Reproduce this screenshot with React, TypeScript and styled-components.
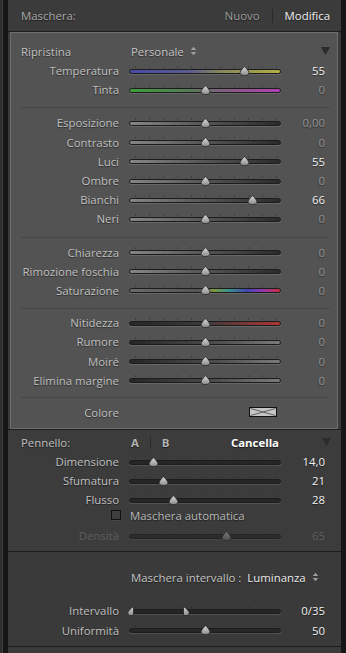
import React, { useId } from "react";
import styled, { createGlobalStyle } from "styled-components";

const GlobalStyle = createGlobalStyle`
  html, body {
    margin: 0;
    padding: 0;
    background: #161616;
  }
  body {
    font-family: "Open Sans", "Liberation Sans", Arial, sans-serif;
    font-size: 11.4px;
  }
`

const GREY_DOWN = "linear-gradient(to right, #858585, #5a5a5a 45%, #2a2a2a)"
const GREY_UP = "linear-gradient(to right, #262626, #4a4a4a 55%, #7a7a7a)"
const TEMP = "linear-gradient(to right, #4a4aa8, #5c5c90 40%, #86865c 60%, #b0b044)"
const TINT = "linear-gradient(to right, #3c9e3c, #587a58 40%, #80607e 60%, #b040b4)"
const SAT = "linear-gradient(to right, #6a6a6a, #555 45%, #7c9a3c 56%, #3a9090 66%, #4048b0 78%, #9038b0 88%, #c8303c)"
const SHARP = "linear-gradient(to right, #262626, #3a3a3a 50%, #b03434)"
const DARK = "#262626"

type SliderDef = { label: string; value: string; pos: number; fill: string; active?: boolean }

const basic: SliderDef[] = [
  { label: "Esposizione", value: "0,00", pos: 0.5, fill: GREY_DOWN },
  { label: "Contrasto", value: "0", pos: 0.5, fill: GREY_DOWN },
  { label: "Luci", value: "55", pos: 0.775, fill: GREY_DOWN, active: true },
  { label: "Ombre", value: "0", pos: 0.5, fill: GREY_DOWN },
  { label: "Bianchi", value: "66", pos: 0.83, fill: GREY_DOWN, active: true },
  { label: "Neri", value: "0", pos: 0.5, fill: GREY_DOWN },
]

const presence: SliderDef[] = [
  { label: "Chiarezza", value: "0", pos: 0.5, fill: GREY_DOWN },
  { label: "Rimozione foschia", value: "0", pos: 0.5, fill: GREY_DOWN },
  { label: "Saturazione", value: "0", pos: 0.5, fill: SAT },
]

const detail: SliderDef[] = [
  { label: "Nitidezza", value: "0", pos: 0.5, fill: SHARP },
  { label: "Rumore", value: "0", pos: 0.5, fill: GREY_UP },
  { label: "Moiré", value: "0", pos: 0.5, fill: GREY_UP },
  { label: "Elimina margine", value: "0", pos: 0.5, fill: GREY_UP },
]

const brush: SliderDef[] = [
  { label: "Dimensione", value: "14,0", pos: 0.14, fill: DARK, active: true },
  { label: "Sfumatura", value: "21", pos: 0.21, fill: DARK, active: true },
  { label: "Flusso", value: "28", pos: 0.28, fill: DARK, active: true },
]

const Thumb = ({ left, dim, half }: { left: number; dim?: boolean; half?: "l" | "r" }) => {
  const id = useId()
  const w = half ? 7 : 11
  const d =
    half === "l"
      ? "M6.5 0.5 V9.5 H4 C1.8 9.5 0.6 8.6 0.8 6.8 C1 5 3.8 2.4 6.5 0.5 Z"
      : half === "r"
      ? "M0.5 0.5 V9.5 H3 C5.2 9.5 6.4 8.6 6.2 6.8 C6 5 3.2 2.4 0.5 0.5 Z"
      : "M5.5 0.5 C6.6 2 9.6 4.4 9.9 6.6 C10.1 8.6 8.4 9.5 5.5 9.5 C2.6 9.5 0.9 8.6 1.1 6.6 C1.4 4.4 4.4 2 5.5 0.5 Z"
  const x = half === "l" ? left - 6.5 : half === "r" ? left - 0.5 : left - 5.5
  return (
    <ThumbSvg width={w} height={10} viewBox={`0 0 ${w} 10`} style={{ left: x }}>
      <defs>
        <linearGradient id={id} x1="0" y1="0" x2="0" y2="1">
          <stop offset="0" stopColor={dim ? "#7a7a7a" : "#dcdcdc"} />
          <stop offset="1" stopColor={dim ? "#4e4e4e" : "#8a8a8a"} />
        </linearGradient>
      </defs>
      <path d={d} fill={`url(#${id})`} stroke={dim ? "#2e2e2e" : "#262626"} strokeWidth="0.8" />
    </ThumbSvg>
  )
}

const Slider = ({ pos, fill, tick, dim, range }: { pos: number; fill: string; tick: string; dim?: boolean; range?: [number, number] }) => (
  <SliderBox>
    <Ticks $color={tick}>
      {Array.from({ length: 11 }).map((_, i) => <i key={i} />)}
    </Ticks>
    <Track $fill={fill} $dim={dim} />
    {range ? (
      <>
        <Thumb left={4 + range[0] * 144} half="l" />
        <Thumb left={4 + range[1] * 144} half="r" />
      </>
    ) : (
      <Thumb left={4 + pos * 144} dim={dim} />
    )}
  </SliderBox>
)

const UpDown = () => (
  <svg width="7" height="10" viewBox="0 0 7 10">
    <path d="M3.5 0.8 L6.3 4 H0.7 Z M0.7 6 H6.3 L3.5 9.2 Z" fill="#9c9c9c" />
  </svg>
)

const Collapse = ({ color }: { color: string }) => (
  <svg width="9" height="8" viewBox="0 0 9 8">
    <path d="M0 0 H9 L4.5 8 Z" fill={color} />
  </svg>
)

const NoColor = () => (
  <svg width="28" height="10" viewBox="0 0 28 10">
    <rect x="0.5" y="0.5" width="27" height="9" fill="#c6c6c6" stroke="#111" />
    <path d="M1.5 1.5 L14 5 L26.5 1.5 M1.5 8.5 L14 5 L26.5 8.5" stroke="#555" strokeWidth="0.9" fill="none" />
  </svg>
)

const SliderRow = ({ s, tick, dimLabel }: { s: SliderDef; tick: string; dimLabel?: boolean }) => (
  <Row>
    <Label $dim={dimLabel}>{s.label}</Label>
    <Slider pos={s.pos} fill={s.fill} tick={tick} />
    <Value $active={s.active}>{s.value}</Value>
  </Row>
)

export default function App() {
  return (
    <Frame>
      <GlobalStyle />
      <Rail />
      <Panel>
        <Header>
          <HeaderTitle>Maschera:</HeaderTitle>
          <ModeTab>Nuovo</ModeTab>
          <ModeDivider />
          <ModeTab $active>Modifica</ModeTab>
        </Header>

        <MaskBox>
          <Group $pt={8} $pb={8}>
            <HeadRow>
              <Label $left>Ripristina</Label>
              <Preset>
                Personale <UpDown />
              </Preset>
              <Collapse color="#2b2b2b" />
            </HeadRow>
            <SliderRow s={{ label: "Temperatura", value: "55", pos: 0.775, fill: TEMP, active: true }} tick="#3f3f3f" />
            <SliderRow s={{ label: "Tinta", value: "0", pos: 0.5, fill: TINT }} tick="#3f3f3f" />
          </Group>
          <Divider />
          <Group>
            {basic.map((s) => <SliderRow key={s.label} s={s} tick="#3f3f3f" />)}
          </Group>
          <Divider />
          <Group>
            {presence.map((s) => <SliderRow key={s.label} s={s} tick="#3f3f3f" />)}
          </Group>
          <Divider />
          <Group $pt={4} $pb={7}>
            {detail.map((s) => <SliderRow key={s.label} s={s} tick="#3f3f3f" />)}
          </Group>
          <Divider />
          <Group $pt={5} $pb={6}>
            <Row>
              <Label>Colore</Label>
              <SwatchCell>
                <NoColor />
              </SwatchCell>
            </Row>
          </Group>
        </MaskBox>

        <BrushSection>
          <HeadRow>
            <Label $left>Pennello:</Label>
            <Tabs>
              <Tab>A</Tab>
              <TabDivider />
              <Tab>B</Tab>
              <Tab $active>Cancella</Tab>
            </Tabs>
            <Collapse color="#2c2c2c" />
          </HeadRow>
          {brush.map((s) => <SliderRow key={s.label} s={s} tick="#323232" />)}
          <CheckRow>
            <Check />
            <CheckText>Maschera automatica</CheckText>
          </CheckRow>
          <Row>
            <Label $dim>Densità</Label>
            <Slider pos={0.65} fill="#2c2c2c" tick="#333" dim />
            <Value $dim>65</Value>
          </Row>
        </BrushSection>

        <RangeSection>
          <HeadRow>
            <span />
            <Preset>
              Maschera intervallo : <Strong>Luminanza</Strong> <UpDown />
            </Preset>
            <span />
          </HeadRow>
          <Spacer />
          <Row>
            <Label>Intervallo</Label>
            <Slider pos={0} fill={DARK} tick="#303030" range={[0, 0.35]} />
            <Value $active>0/35</Value>
          </Row>
          <Row>
            <Label>Uniformità</Label>
            <Slider pos={0.5} fill={DARK} tick="#303030" />
            <Value $active>50</Value>
          </Row>
        </RangeSection>
        <Rest />
      </Panel>
    </Frame>
  )
}

const Frame = styled.div`
  display: flex;
  width: 346px;
  height: 653px;
  background: #161616;
  overflow: hidden;
`

const Rail = styled.div`
  width: 2px;
  margin-right: 5px;
  background: #2e2e2e;
  border-right: 1px solid #404040;
`

const Panel = styled.div`
  display: flex;
  flex-direction: column;
  width: 333px;
  background: #3a3a3a;
`

const Header = styled.div`
  display: flex;
  align-items: center;
  height: 31px;
  padding: 0 11px 0 13px;
  border-bottom: 1px solid #1c1c1c;
  background: #3b3b3b;
  text-shadow: 0 1px 1px rgba(0, 0, 0, 0.5);
`

const HeaderTitle = styled.div`
  flex: 1;
  color: #a9a9a9;
`

const ModeTab = styled.div<{ $active?: boolean }>`
  color: ${(p) => (p.$active ? "#f2f2f2" : "#9e9e9e")};
`

const ModeDivider = styled.div`
  width: 1px;
  height: 14px;
  margin: 0 12px;
  background: #2a2a2a;
`

const MaskBox = styled.div`
  margin: 0 3px 0 2px;
  border: 1px solid #6e6e6e;
  background: #535353;
`

const Group = styled.div<{ $pt?: number; $pb?: number }>`
  padding: ${(p) => p.$pt ?? 5}px 0 ${(p) => p.$pb ?? 8}px;
`

const Divider = styled.div`
  height: 1px;
  margin: 0 7px 0 10px;
  background: #474747;
`

const HeadRow = styled.div`
  display: grid;
  grid-template-columns: 110px 1fr auto;
  align-items: center;
  height: 20px;
  padding: 0 7px 0 10px;
`

const Preset = styled.div`
  display: flex;
  align-items: center;
  gap: 6px;
  color: #c4c4c4;
  text-shadow: 0 1px 1px rgba(0, 0, 0, 0.5);
  white-space: nowrap;
`

const Strong = styled.span`
  color: #ececec;
`

const Row = styled.div`
  display: grid;
  grid-template-columns: 108px 162px 44px;
  grid-template-rows: 19.2px;
  align-items: center;
  height: 19.2px;
`

const Label = styled.span<{ $dim?: boolean; $left?: boolean }>`
  text-align: ${(p) => (p.$left ? "left" : "right")};
  white-space: nowrap;
  color: ${(p) => (p.$dim ? "#5c5c5c" : "#c0c0c0")};
  text-shadow: ${(p) => (p.$dim ? "none" : "0 1px 1px rgba(0, 0, 0, 0.5)")};
`

const Value = styled.span<{ $active?: boolean; $dim?: boolean }>`
  text-align: right;
  color: ${(p) => (p.$dim ? "#5e5e5e" : p.$active ? "#f0f0f0" : "#949494")};
  text-shadow: ${(p) => (p.$dim ? "none" : "0 1px 1px rgba(0, 0, 0, 0.5)")};
`

const SliderBox = styled.div`
  position: relative;
  width: 152px;
  height: 14px;
  margin-left: 10px;
`

const Ticks = styled.div<{ $color: string }>`
  position: absolute;
  top: 2px;
  left: 6px;
  right: 4px;
  display: flex;
  justify-content: space-between;
  & > i {
    width: 1px;
    height: 2px;
    background: ${(p) => p.$color};
  }
`

const Track = styled.div<{ $fill: string; $dim?: boolean }>`
  box-sizing: border-box;
  height: 5px;
  margin-top: 5px;
  border-radius: 3px;
  border: 1px solid ${(p) => (p.$dim ? "#242424" : "#1c1c1c")};
  background: ${(p) => p.$fill};
  box-shadow: 0 1px 0 rgba(255, 255, 255, ${(p) => (p.$dim ? 0.05 : 0.12)});
`

const ThumbSvg = styled.svg`
  position: absolute;
  top: 2px;
`

const SwatchCell = styled.div`
  display: flex;
  justify-content: flex-end;
  padding-right: 4px;
`

const BrushSection = styled.div`
  padding: 2px 3px 6px 3px;
  border-top: 1px solid #1c1c1c;
  background: #3c3c3c;
`

const Tabs = styled.div`
  display: flex;
  align-items: center;
  padding-right: 43px;
`

const Tab = styled.span<{ $active?: boolean }>`
  font-weight: 700;
  color: ${(p) => (p.$active ? "#ffffff" : "#b4b4b4")};
  text-shadow: 0 1px 1px rgba(0, 0, 0, 0.6);
  margin-left: ${(p) => (p.$active ? "auto" : "0")};
`

const TabDivider = styled.div`
  width: 1px;
  height: 13px;
  margin: 0 11px;
  background: #2a2a2a;
`

const CheckRow = styled.div`
  display: grid;
  grid-template-columns: 108px 162px 44px;
  grid-template-rows: 11px;
  align-items: center;
  height: 11px;
  line-height: 11px;
  margin-bottom: 5.5px;
`

const Check = styled.div`
  justify-self: end;
  width: 8px;
  height: 8px;
  margin-right: -2px;
  border: 1px solid #111;
  background: #3e3e3e;
  box-shadow: 0 1px 0 rgba(255, 255, 255, 0.06);
`

const CheckText = styled.span`
  padding-left: 11px;
  color: #b8b8b8;
  white-space: nowrap;
  text-shadow: 0 1px 1px rgba(0, 0, 0, 0.5);
`

const RangeSection = styled.div`
  padding: 15px 3px 6px 3px;
  border-top: 1px solid #1c1c1c;
  border-bottom: 1px solid #1c1c1c;
  background: #3a3a3a;
`

const Spacer = styled.div`
  height: 14px;
`

const Rest = styled.div`
  flex: 1;
  background: #3a3a3a;
`
